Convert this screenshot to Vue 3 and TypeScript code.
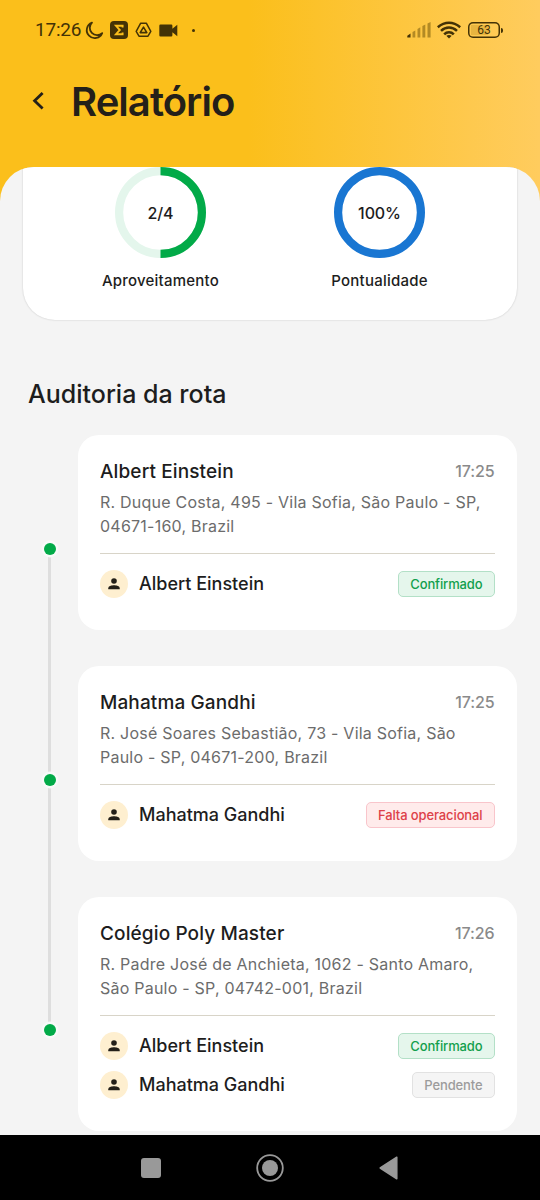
<script setup lang="ts">
type Tone = 'ok' | 'fail' | 'idle'

interface Passenger {
  name: string
  status: string
  tone: Tone
}

interface Stop {
  title: string
  time: string
  address: string[]
  passengers: Passenger[]
}

const stops: Stop[] = [
  {
    title: 'Albert Einstein',
    time: '17:25',
    address: ['R. Duque Costa, 495 - Vila Sofia, São Paulo - SP,', '04671-160, Brazil'],
    passengers: [{ name: 'Albert Einstein', status: 'Confirmado', tone: 'ok' }],
  },
  {
    title: 'Mahatma Gandhi',
    time: '17:25',
    address: ['R. José Soares Sebastião, 73 - Vila Sofia, São', 'Paulo - SP, 04671-200, Brazil'],
    passengers: [{ name: 'Mahatma Gandhi', status: 'Falta operacional', tone: 'fail' }],
  },
  {
    title: 'Colégio Poly Master',
    time: '17:26',
    address: ['R. Padre José de Anchieta, 1062 - Santo Amaro,', 'São Paulo - SP, 04742-001, Brazil'],
    passengers: [
      { name: 'Albert Einstein', status: 'Confirmado', tone: 'ok' },
      { name: 'Mahatma Gandhi', status: 'Pendente', tone: 'idle' },
    ],
  },
]
</script>

<template>
  <div class="phone">
    <header class="header">
      <div class="status">
        <span class="clock">17:26</span>
        <svg class="moon" width="19" height="19" viewBox="0 0 19 19">
          <path d="M7 1.6A8 8 0 1 0 17.2 12.1A7.2 7.2 0 0 1 7 1.6Z" fill="none" stroke="#433206" stroke-width="1.8" stroke-linejoin="round" />
        </svg>
        <svg class="sigma" width="18" height="18" viewBox="0 0 18 18">
          <rect width="18" height="18" rx="4" fill="#433206" />
          <path d="M12.6 6.6V4.8H6L9.8 9L6 13.2H12.6V11.4" fill="none" stroke="#fbbf1b" stroke-width="1.9" />
        </svg>
        <svg class="drive" width="17" height="16" viewBox="0 0 17 16">
          <path d="M5.7 1.2H11.3L15.8 9.3L13 14.2H4L1.2 9.3Z" fill="none" stroke="#433206" stroke-width="1.5" stroke-linejoin="round" />
          <path d="M8.5 5.2L11.8 10.6H5.2Z" fill="none" stroke="#433206" stroke-width="1.6" stroke-linejoin="round" />
        </svg>
        <svg class="camera" width="19" height="13" viewBox="0 0 19 13">
          <path d="M1.5 0.5H12.2Q13.4 .5 13.4 1.7V4.8L18.3 .8V12.2L13.4 8.2V11.3Q13.4 12.5 12.2 12.5H1.5Q.3 12.5 .3 11.3V1.7Q.3 .5 1.5 .5Z" fill="#433206" />
        </svg>
        <i class="more"></i>
        <span class="grow"></span>
        <svg class="signal" width="25" height="16" viewBox="0 0 25 16">
          <path d="M.3 15.5V13.7L3.5 11.5V15.5Z" fill="#433206" />
          <path d="M5.5 15.5V10L8.3 8.6V15.5ZM10.5 15.5V7L13.3 5.3V15.5ZM15.4 15.5V4L18.3 2.4V15.5ZM20.5 15.5V1.4L23.6 0V15.5Z" fill="#b38a24" />
        </svg>
        <svg class="wifi" width="24" height="18" viewBox="0 0 24 18">
          <g fill="none" stroke="#433206" stroke-width="2.5">
            <path d="M.8 6.2Q6 1.8 12 1.8T23.2 6.2" />
            <path d="M4 9.9Q7.6 6.6 12 6.6T20 9.9" />
            <path d="M7.2 13.3Q9.2 11.2 12 11.2T16.8 13.3" />
          </g>
          <path d="M9.3 14.8Q12 13 14.7 14.8L12 17.6Z" fill="#433206" />
        </svg>
        <div class="battery"><span>63</span></div>
      </div>
      <div class="titlebar">
        <svg class="back" width="13" height="20" viewBox="0 0 13 20">
          <path d="M11.6 2L3.6 9.7L11.6 17.4" fill="none" stroke="#242019" stroke-width="2.8" />
        </svg>
        <h1>Relatório</h1>
      </div>
    </header>

    <main class="sheet">
      <section class="summary">
        <div class="metric">
          <div class="ring">
            <svg width="91" height="91" viewBox="0 0 91 91">
              <circle cx="45.5" cy="45.5" r="41.4" fill="none" stroke="#e4f6ec" stroke-width="8.2" />
              <path d="M45.5 4.1A41.4 41.4 0 0 1 45.5 86.9" fill="none" stroke="#02aa48" stroke-width="8.2" />
            </svg>
            <b>2/4</b>
          </div>
          <span>Aproveitamento</span>
        </div>
        <div class="metric">
          <div class="ring">
            <svg width="91" height="91" viewBox="0 0 91 91">
              <circle cx="45.5" cy="45.5" r="41.4" fill="none" stroke="#1976d2" stroke-width="8.2" />
            </svg>
            <b>100%</b>
          </div>
          <span>Pontualidade</span>
        </div>
      </section>

      <h2>Auditoria da rota</h2>

      <section class="route">
        <div v-for="(stop, i) in stops" :key="i" class="stop">
          <div class="rail">
            <i :class="['line', { hidden: i === 0 }]"></i>
            <i class="dot"></i>
            <i :class="['line', { hidden: i === stops.length - 1 }]"></i>
          </div>
          <article class="card">
            <div class="card-head">
              <h3>{{ stop.title }}</h3>
              <time>{{ stop.time }}</time>
            </div>
            <p>
              <span v-for="part in stop.address" :key="part">{{ part }}</span>
            </p>
            <div class="people">
              <div v-for="p in stop.passengers" :key="p.name" class="person">
                <span class="avatar">
                  <svg width="12" height="12" viewBox="0 0 12 12">
                    <circle cx="6" cy="3" r="2.8" fill="#242019" />
                    <path d="M.3 11.3V10.2C.3 8 3.5 7.2 6 7.2S11.7 8 11.7 10.2V11.3Z" fill="#242019" />
                  </svg>
                </span>
                <span class="name">{{ p.name }}</span>
                <span :class="['badge', p.tone]">{{ p.status }}</span>
              </div>
            </div>
          </article>
        </div>
      </section>
    </main>

    <nav class="navbar">
      <svg width="20" height="20" viewBox="0 0 20 20"><rect width="20" height="20" rx="3" fill="#999" /></svg>
      <svg width="28" height="28" viewBox="0 0 28 28">
        <circle cx="14" cy="14" r="12.8" fill="none" stroke="#999" stroke-width="1.8" />
        <circle cx="14" cy="14" r="8" fill="#999" />
      </svg>
      <svg width="19" height="24" viewBox="0 0 19 24"><path d="M17.8 1.2V22.8L1.2 12Z" fill="#999" stroke="#999" stroke-width="1.5" stroke-linejoin="round" /></svg>
    </nav>
  </div>
</template>

<style>
body {
  margin: 0;
  background: #f4f4f4;
}
</style>

<style scoped>
* {
  box-sizing: border-box;
}

.phone {
  width: 540px;
  height: 1200px;
  display: flex;
  flex-direction: column;
  overflow: hidden;
  font-family: Inter, 'Open Sans', sans-serif;
  color: #1d1d1d;
  background: linear-gradient(90deg, #fbbf1b 0%, #fbbf1b 46%, #ffcc5e 100%);
}

h1, h2, h3, p {
  margin: 0;
}

.header {
  height: 167px;
  flex: none;
}

.status {
  height: 60px;
  display: flex;
  align-items: center;
  padding: 0 40px 0 35px;
  color: #433206;
}

.status svg {
  flex: none;
}

.clock {
  width: 50px;
  font: 400 19px/22px Roboto, sans-serif;
  letter-spacing: -0.2px;
  white-space: nowrap;
}

.sigma {
  margin-left: 6px;
}

.drive {
  margin-left: 7px;
}

.camera {
  margin-left: 7px;
}

.more {
  width: 3px;
  height: 3px;
  margin-left: 14px;
  border-radius: 50%;
  background: #433206;
}

.grow {
  flex: 1;
}

.wifi {
  margin-left: 5px;
}

.battery {
  position: relative;
  display: flex;
  align-items: center;
  justify-content: center;
  width: 32px;
  height: 16px;
  margin-left: 7px;
  border-radius: 5px;
  box-shadow: inset 0 0 0 1.5px #433206;
  background: linear-gradient(90deg, transparent 3px, #e8b540 3px, #e8b540 20px, transparent 20px) 0 3px / 100% 10px no-repeat;
  font: 400 12px/12px Roboto, sans-serif;
}

.battery::after {
  content: '';
  position: absolute;
  right: -3px;
  top: 5.5px;
  width: 2px;
  height: 5px;
  border-radius: 0 2px 2px 0;
  background: #433206;
}

.titlebar {
  height: 84px;
  display: flex;
  align-items: center;
  padding-left: 31px;
}

.back {
  margin-top: -2px;
}

h1 {
  margin-left: 27px;
  font: 600 40px/48px Inter, sans-serif;
  letter-spacing: -0.95px;
  color: #242019;
}

.sheet {
  height: 968px;
  flex: none;
  overflow: hidden;
  border-radius: 34px 34px 0 0;
  background: #f4f4f4;
}

.summary {
  height: 153px;
  margin: 0 23px;
  display: grid;
  grid-template-columns: 219px 219px;
  justify-content: center;
  border-radius: 0 0 32px 32px;
  background: #fff;
  box-shadow: 0 0 2px rgba(0, 0, 0, 0.2);
}

.metric {
  display: flex;
  flex-direction: column;
  align-items: center;
  font-size: 15px;
  line-height: 20px;
  font-weight: 500;
  letter-spacing: 0.22px;
}

.metric > span {
  margin-top: 13px;
}

.ring {
  display: grid;
  height: 91px;
  place-items: center;
}

.ring > * {
  grid-area: 1 / 1;
}

.ring b {
  font-size: 16px;
  font-weight: 500;
  letter-spacing: -0.1px;
}

h2 {
  margin: 57px 0 0 28px;
  font-size: 25px;
  line-height: 34px;
  font-weight: 500;
}

.route {
  margin-top: 24px;
}

.stop {
  display: flex;
  margin-right: 23px;
}

.rail {
  width: 13px;
  margin-left: 43px;
  margin-right: 22px;
  display: flex;
  flex-direction: column;
  align-items: center;
  position: relative;
  top: -1.7px;
}

.line {
  width: 3px;
  flex: 1;
  background: #dedede;
}

.line.hidden {
  visibility: hidden;
}

.dot {
  width: 12px;
  height: 12px;
  border-radius: 50%;
  background: #02aa48;
  box-shadow: 0 0 0 2.5px #f8faf9;
  z-index: 1;
}

.card {
  flex: 1;
  margin-bottom: 36px;
  padding: 23px 22.5px 32px 22px;
  border-radius: 21px;
  background: #fff;
}

.card-head {
  display: flex;
  justify-content: space-between;
  align-items: center;
  height: 27px;
}

h3 {
  font-size: 19px;
  font-weight: 500;
  letter-spacing: 0.12px;
}

time {
  margin-top: -1px;
  font-size: 16px;
  font-weight: 500;
  letter-spacing: -0.1px;
  color: #8a8a8a;
}

p {
  margin-top: 6px;
  font-size: 16px;
  line-height: 23.5px;
  font-weight: 400;
  letter-spacing: 0.23px;
  color: #6c6c6c;
}

p span {
  display: block;
  white-space: nowrap;
}

.people {
  margin-top: 15px;
  padding-top: 16.5px;
  border-top: 1px solid #d8d4c8;
  display: flex;
  flex-direction: column;
  gap: 11px;
}

.person {
  display: flex;
  align-items: center;
  height: 27.5px;
}

.avatar {
  width: 28px;
  height: 28px;
  display: grid;
  place-items: center;
  border-radius: 50%;
  background: #feefd0;
}

.name {
  margin-left: 11px;
  margin-top: -1px;
  font-size: 18px;
  font-weight: 500;
}

.badge {
  margin-left: auto;
  height: 26px;
  padding: 0 11px;
  border: 1px solid;
  border-radius: 5px;
  font-size: 13px;
  line-height: 24px;
  font-weight: 500;
  letter-spacing: -0.12px;
  text-align: center;
  white-space: nowrap;
}

.ok {
  color: #129f4c;
  background: #e5f6ec;
  border-color: #b3e0c7;
}

.fail {
  color: #dd4148;
  background: #ffebeb;
  border-color: #f9c5cb;
}

.idle {
  color: #9c9c9c;
  background: #f5f5f5;
  border-color: #e2e2e2;
}

.navbar {
  flex: none;
  height: 65px;
  display: flex;
  align-items: center;
  justify-content: space-between;
  padding: 0 142px 0 141px;
  background: #000;
}
</style>
